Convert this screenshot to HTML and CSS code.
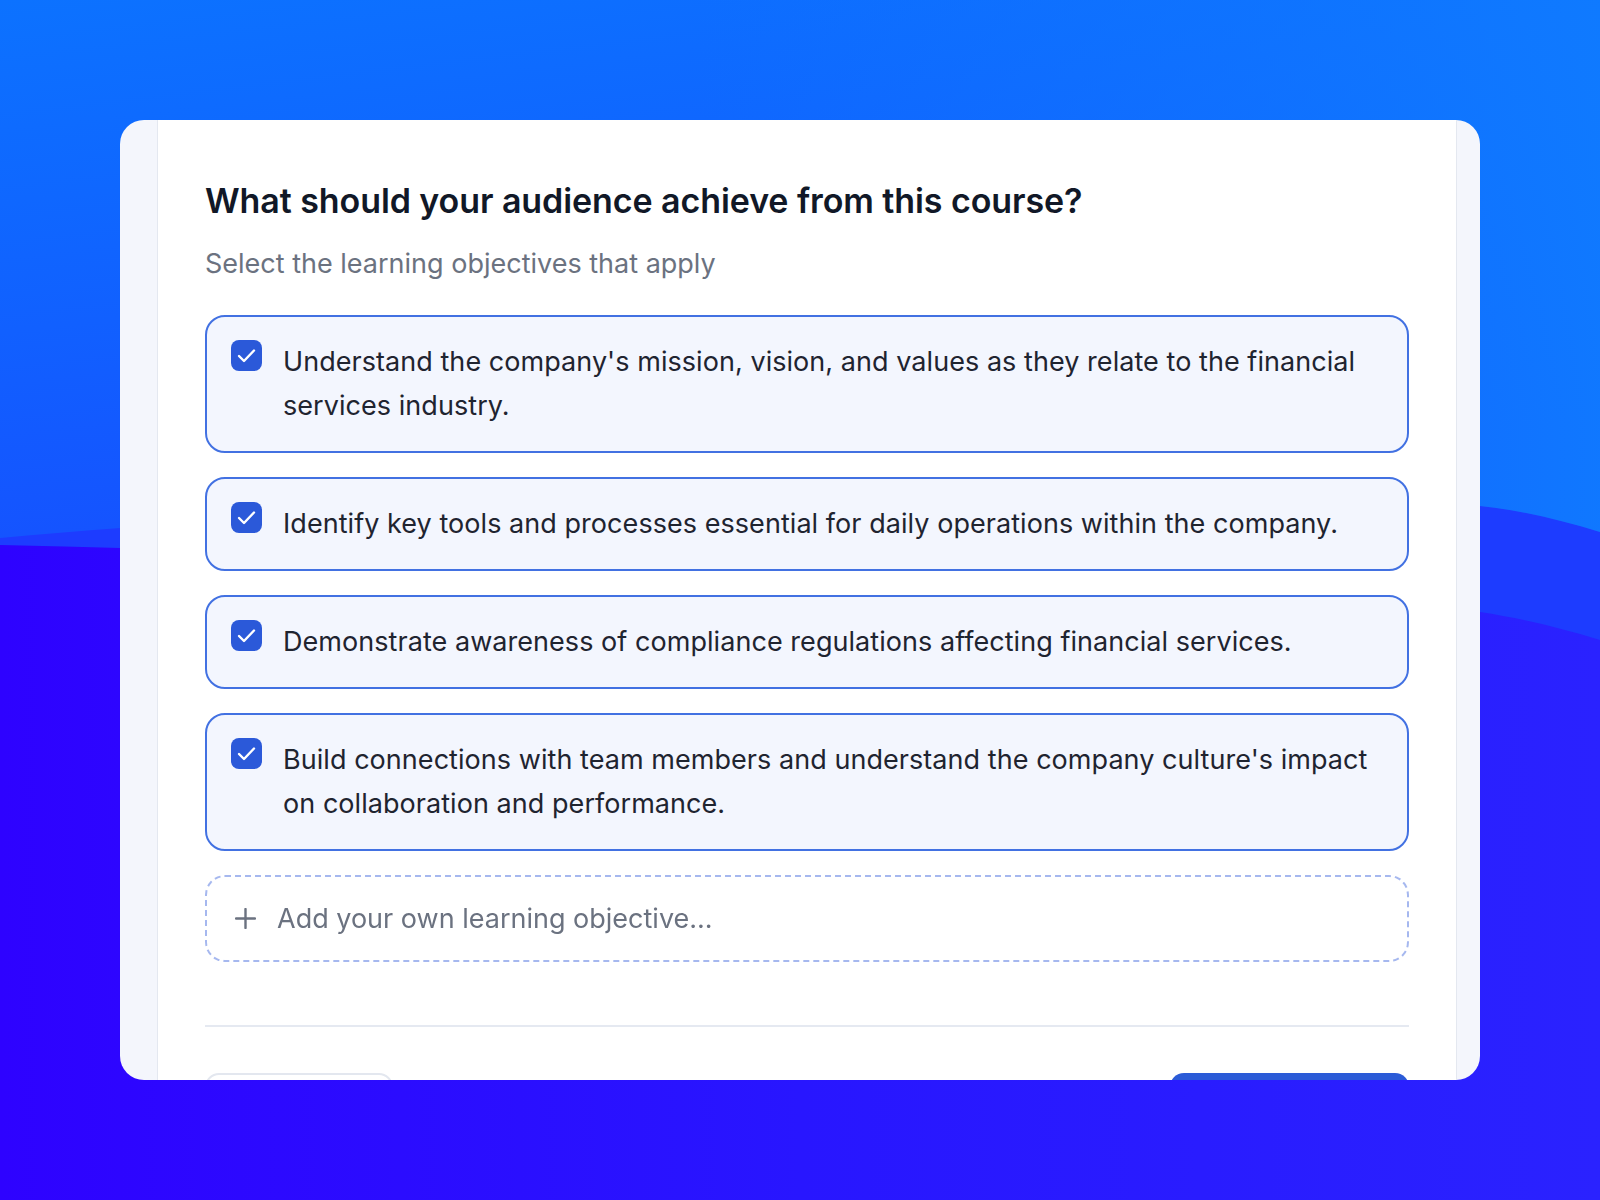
FILE: index.html
```html
<!DOCTYPE html>
<html lang="en">
<head>
<meta charset="utf-8">
<title>Learning objectives</title>
<link rel="stylesheet" href="styles.css">
</head>
<body>
<svg class="backdrop" viewBox="0 0 1600 1200" preserveAspectRatio="none" aria-hidden="true">
  <defs>
    <linearGradient id="gBase" x1="0" y1="0" x2="1" y2="0">
      <stop offset="0" stop-color="#2e02ff"/>
      <stop offset="0.5" stop-color="#2816ff"/>
      <stop offset="1" stop-color="#2a22ff"/>
    </linearGradient>
    <linearGradient id="gTop" x1="0" y1="0" x2="0.35" y2="1">
      <stop offset="0" stop-color="#0c72ff"/>
      <stop offset="0.55" stop-color="#1160ff"/>
      <stop offset="1" stop-color="#1650ff"/>
    </linearGradient>
    <linearGradient id="gTopR" x1="0" y1="0" x2="1" y2="0">
      <stop offset="0" stop-color="#0f78ff" stop-opacity="0"/>
      <stop offset="1" stop-color="#0f7cff" stop-opacity="0.9"/>
    </linearGradient>
  </defs>
  <rect x="0" y="0" width="1600" height="1200" fill="url(#gBase)"/>
  <path d="M0 0 H1600 V640 C1560 628 1520 618 1480 612 C1200 580 600 560 0 545 Z" fill="#1d3cff"/>
  <path d="M0 0 H1600 V532 C1560 520 1520 510 1480 506 C1100 480 500 505 120 528 C80 531 40 534 0 538 Z" fill="url(#gTop)"/>
  <path d="M700 0 H1600 V532 C1560 520 1520 510 1480 506 C1200 488 950 490 700 500 Z" fill="url(#gTopR)"/>
</svg>
<main class="stage">
  <section class="card">
    <div class="panel">
      <h1 class="title">What should your audience achieve from this course?</h1>
      <p class="subtitle">Select the learning objectives that apply</p>
      <ul class="options">
        <li class="option">
          <span class="check"><svg viewBox="0 0 31 31"><path d="M8 16 L13 21 L23 10.5" /></svg></span>
          <span class="option-text">Understand the company's mission, vision, and values as they relate to the financial services industry.</span>
        </li>
        <li class="option">
          <span class="check"><svg viewBox="0 0 31 31"><path d="M8 16 L13 21 L23 10.5" /></svg></span>
          <span class="option-text">Identify key tools and processes essential for daily operations within the company.</span>
        </li>
        <li class="option">
          <span class="check"><svg viewBox="0 0 31 31"><path d="M8 16 L13 21 L23 10.5" /></svg></span>
          <span class="option-text">Demonstrate awareness of compliance regulations affecting financial services.</span>
        </li>
        <li class="option">
          <span class="check"><svg viewBox="0 0 31 31"><path d="M8 16 L13 21 L23 10.5" /></svg></span>
          <span class="option-text">Build connections with team members and understand the company culture's impact on collaboration and performance.</span>
        </li>
      </ul>
      <div class="add">
        <svg class="plus" viewBox="0 0 21 21"><path d="M10.5 1 V20 M1 10.5 H20"/></svg>
        <span class="add-text">Add your own learning objective...</span>
      </div>
      <div class="divider"></div>
      <div class="footer">
        <span class="btn btn-ghost" role="button" aria-label="Back"></span>
        <span class="btn btn-primary" role="button" aria-label="Continue"></span>
      </div>
    </div>
  </section>
</main>
</body>
</html>
```

FILE: styles.css
```css
* { box-sizing: border-box; }

html, body {
  margin: 0;
  padding: 0;
  width: 1600px;
  height: 1200px;
  overflow: hidden;
}

body {
  font-family: Inter, "Noto Sans", "Liberation Sans", sans-serif;
  background: #2414ff;
}

.backdrop {
  position: fixed;
  left: 0;
  top: 0;
  width: 1600px;
  height: 1200px;
  z-index: 0;
}

.stage {
  position: relative;
  z-index: 1;
  padding: 120px 0 0 120px;
}

.card {
  width: 1360px;
  height: 960px;
  border-radius: 24px;
  overflow: hidden;
  background: #f4f6fc;
  padding: 0 23px 0 37px;
}

.panel {
  height: 100%;
  background: #ffffff;
  border-left: 1px solid #e4e8f0;
  border-right: 1px solid #e4e8f0;
  padding: 60px 47px 0 47px;
  display: flex;
  flex-direction: column;
}

.panel > * { flex-shrink: 0; }

.title {
  margin: 0;
  font-size: 34px;
  line-height: 41px;
  font-weight: 600;
  color: #111827;
  letter-spacing: -0.08px;
}

.subtitle {
  margin: 23px 0 0 0;
  font-size: 27px;
  line-height: 39px;
  color: #6b7280;
}

.options {
  list-style: none;
  margin: 32px 0 0 0;
  padding: 0;
  display: flex;
  flex-direction: column;
  gap: 24px;
}

.option {
  display: flex;
  align-items: flex-start;
  gap: 21px;
  padding: 23px 24px;
  border: 2px solid #4271e2;
  border-radius: 20px;
  background: #f3f6fe;
}

.check {
  flex: 0 0 31px;
  width: 31px;
  height: 31px;
  border-radius: 8px;
  background: #2b59d9;
  display: flex;
}

.check svg {
  width: 31px;
  height: 31px;
  fill: none;
  stroke: #ffffff;
  stroke-width: 2.4;
  stroke-linecap: round;
  stroke-linejoin: round;
}

.option-text {
  font-size: 27px;
  line-height: 44px;
  color: #1f2430;
  letter-spacing: 0.05px;
}

.add {
  margin-top: 24px;
  display: flex;
  align-items: center;
  gap: 21px;
  padding: 22px 28px;
  border: 2px dashed #a6b8ef;
  border-radius: 20px;
  background: #ffffff;
}

.plus {
  width: 21px;
  height: 21px;
  fill: none;
  stroke: #6b7280;
  stroke-width: 2.4;
  stroke-linecap: round;
}

.add-text {
  font-size: 27px;
  line-height: 39px;
  color: #6b7280;
}

.divider {
  margin-top: 63px;
  height: 2px;
  background: #e5e9f1;
}

.footer {
  margin-top: 46px;
  display: flex;
  justify-content: space-between;
}

.btn {
  display: block;
  height: 60px;
  border-radius: 14px;
}

.btn-ghost {
  width: 188px;
  background: #ffffff;
  border: 2px solid #e3e7ef;
}

.btn-primary {
  width: 239px;
  background: #2b5bd7;
}
```
